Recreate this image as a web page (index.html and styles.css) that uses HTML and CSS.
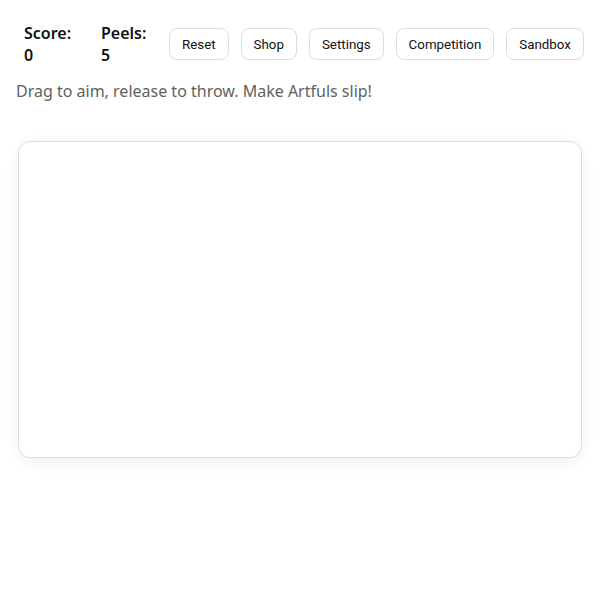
FILE: index.html
```html
<!DOCTYPE html>
<html>
<head>
<meta charset="utf-8">
<link rel="stylesheet" href="styles.css">
</head>
<body>
<div class="app">
  <div class="topbar">
    <div class="stat stat-score">Score:<br>0</div>
    <div class="stat stat-peels">Peels:<br>5</div>
    <button class="btn">Reset</button>
    <button class="btn">Shop</button>
    <button class="btn">Settings</button>
    <button class="btn">Competition</button>
    <button class="btn">Sandbox</button>
  </div>
  <p class="hint">Drag to aim, release to throw. Make Artfuls slip!</p>
  <div class="stage"></div>
</div>
</body>
</html>
```
FILE: styles.css
```css
html, body {
  margin: 0;
  padding: 0;
  background: #fff;
}
body {
  font-family: "Noto Sans", "Open Sans", sans-serif;
  color: #111;
}
.app {
  padding: 22px 16px 16px 16px;
}
.topbar {
  display: flex;
  align-items: center;
  gap: 12px;
  padding-left: 8px;
}
.stat {
  flex-shrink: 0;
  font-weight: 600;
  font-size: 16px;
  line-height: 22px;
}
.stat-score { width: 65px; }
.stat-peels { width: 56px; }
.btn {
  flex-shrink: 0;
  font-family: Roboto, sans-serif;
  font-size: 13.333px;
  height: 32px;
  padding: 0 12px;
  border: 1px solid #dcdcdc;
  border-radius: 8px;
  background: #fff;
  color: #111;
}
.hint {
  margin: 14px 0 0 0;
  font-size: 16px;
  line-height: 22px;
  color: #5f5f5f;
}
.stage {
  margin: 39px 2px 0 2px;
  height: 315px;
  border: 1px solid #dddddd;
  border-radius: 12px;
  background: #fff;
  box-shadow: 0 4px 16px rgba(0,0,0,0.06);
}
```
